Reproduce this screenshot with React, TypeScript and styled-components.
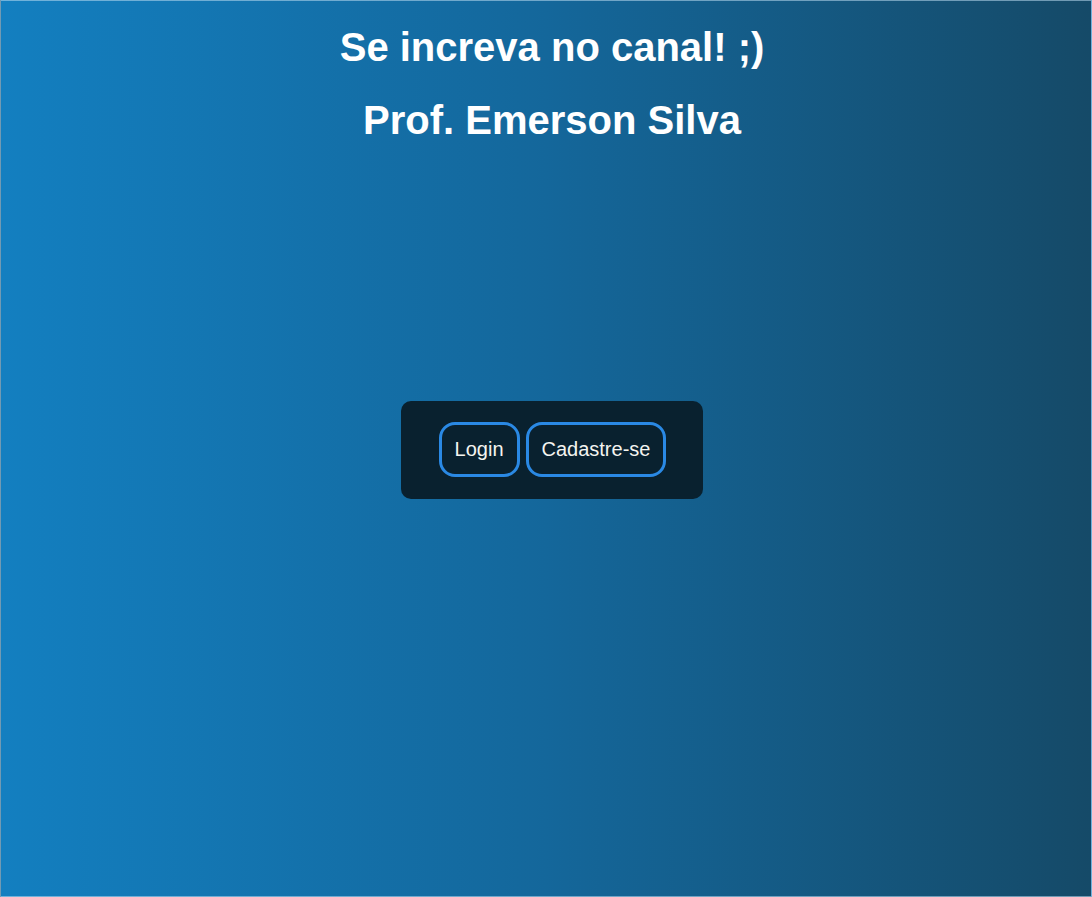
import React from "react";
import styled, { createGlobalStyle } from "styled-components";

const GlobalStyle = createGlobalStyle`
  html, body {
    margin: 0;
    padding: 0;
    height: 100%;
  }
  body {
    font-family: "Liberation Sans", Arial, sans-serif;
  }
`;

const Page = styled.div`
  box-sizing: border-box;
  min-height: 100vh;
  border: 1px solid rgba(190, 220, 240, 0.55);
  background: linear-gradient(to right, #137fc0 0%, #14679b 50%, #154a68 100%);
  display: flex;
  flex-direction: column;
  align-items: center;
  padding-left: 12px;
  color: #ffffff;
`;

const Header = styled.header`
  display: flex;
  flex-direction: column;
  align-items: center;
  gap: 27px;
  padding-top: 23px;
`;

const Title = styled.h1`
  font-size: 40px;
  font-weight: 700;
  margin: 0;
  line-height: 46px;
  text-align: center;
`;

const Panel = styled.div`
  margin-top: 258px;
  display: flex;
  gap: 6px;
  padding: 21px 37px 22px 38px;
  background: #09212f;
  border-radius: 10px;
`;

const Button = styled.button`
  font-family: "Liberation Sans", Arial, sans-serif;
  font-size: 20px;
  line-height: 23px;
  color: #f4f4f0;
  background: transparent;
  border: 3px solid #2a89e4;
  border-radius: 16px;
  padding: 13px 13px;
  cursor: pointer;
`;

export default function App() {
  return (
    <>
      <GlobalStyle />
      <Page>
        <Header>
          <Title>Se increva no canal! ;)</Title>
          <Title>Prof. Emerson Silva</Title>
        </Header>
        <Panel>
          <Button>Login</Button>
          <Button>Cadastre-se</Button>
        </Panel>
      </Page>
    </>
  );
}
